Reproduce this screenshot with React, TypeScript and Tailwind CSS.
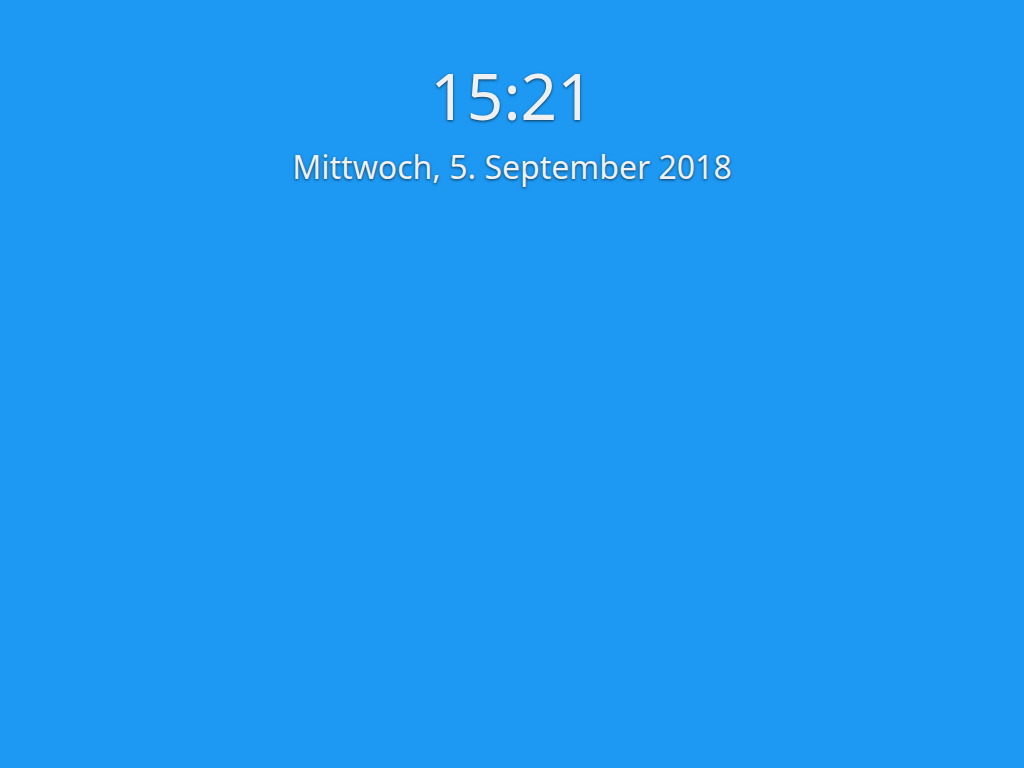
export default function App() {
  return (
    <main
      className="w-[1024px] h-[768px] bg-[#1d99f3] flex flex-col items-center text-[#eff0f1]"
      style={{ fontFamily: '"Noto Sans", "Open Sans", sans-serif' }}
    >
      <div className="mt-[52px] text-[64px] leading-[88px] [text-shadow:0_1px_3px_rgba(0,0,0,0.65)]">
        15:21
      </div>
      <div className="mt-[7px] text-[32px] leading-[40px] [text-shadow:0_1px_3px_rgba(0,0,0,0.65)]">
        Mittwoch, 5. September 2018
      </div>
    </main>
  );
}
